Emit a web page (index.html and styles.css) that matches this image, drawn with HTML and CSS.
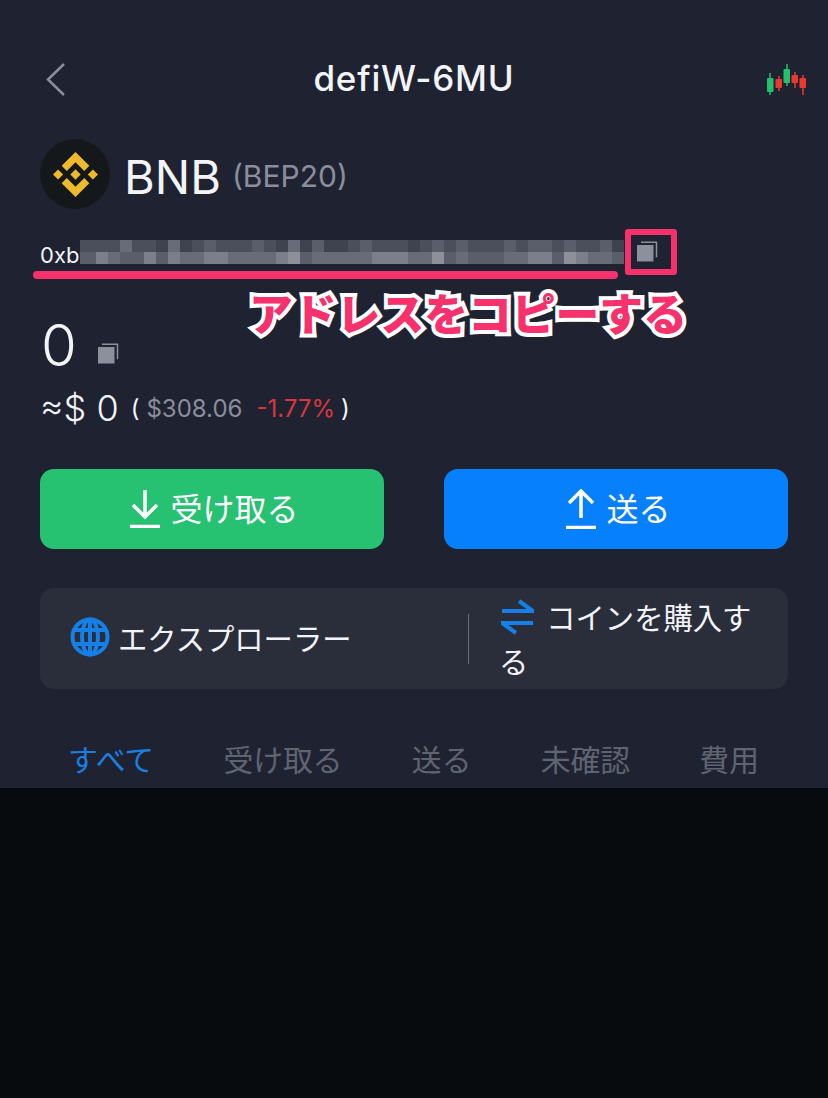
FILE: index.html
```html
<!DOCTYPE html>
<html lang="ja">
  <head>
    <meta charset="UTF-8" />
    <meta name="viewport" content="width=device-width, initial-scale=1.0" />
    <title>defiW-6MU</title>
    <link rel="stylesheet" href="styles.css">
  </head>

  <body>
    <div class="app">
      <div class="header">
        <svg class="back" width="20" height="34" viewBox="0 0 20 34"><path d="M18 2 2 17.500 18 33"/></svg>
        <h1 class="title">defiW-6MU</h1>
        <svg class="chart" width="42" height="32" viewBox="0 0 42 32">
          <path class="wick-g" d="M4 9v22M21 0v22"/>
          <path class="wick-r" d="M13 12v15M29 8v16M37 11v20"/>
          <rect class="body-g" x="1" y="14" width="6.500" height="14" rx="1"/>
          <rect class="body-r" x="9.500" y="15" width="6.500" height="9" rx="1"/>
          <rect class="body-g" x="17.500" y="5" width="6.500" height="14" rx="1"/>
          <rect class="body-r" x="25.500" y="11" width="6.500" height="8" rx="1"/>
          <rect class="body-r" x="33.500" y="14" width="6.500" height="10" rx="1"/>
        </svg>
      </div>

      <div class="coin">
        <div class="coin-logo">
          <svg width="45" height="45" viewBox="0 0 126.610 126.610">
            <polygon points="38.730 53.200 63.310 28.620 87.900 53.210 102.200 38.910 63.310 0 24.420 38.900"/>
            <polygon points="0 63.310 14.300 49.010 28.600 63.310 14.300 77.610"/>
            <polygon points="38.730 73.410 63.310 98 87.900 73.400 102.210 87.690 63.310 126.610 24.420 87.710"/>
            <polygon points="98.010 63.310 112.310 49.010 126.610 63.310 112.310 77.610"/>
            <polygon points="77.810 63.300 63.310 48.810 48.820 63.300 63.310 77.800"/>
          </svg>
        </div>
        <span class="coin-name">BNB</span>
        <span class="coin-net">(BEP20)</span>
      </div>

      <div class="address">
        <span class="address-head">0xb</span>
        <div class="blur">
          <i class="t2"></i><i class="t2"></i><i class="t2"></i><i class="t2"></i><i class="t4"></i><i class="t2"></i><i class="t2"></i><i class="t1"></i><i class="t4"></i><i class="t1"></i><i class="t2"></i><i class="t3"></i><i class="t2"></i><i class="t2"></i><i class="t2"></i><i class="t3"></i>
          <i class="t2"></i><i class="t1"></i><i class="t4"></i><i class="t1"></i><i class="t3"></i><i class="t1"></i><i class="t1"></i><i class="t2"></i><i class="t3"></i><i class="t2"></i><i class="t2"></i><i class="t2"></i><i class="t1"></i><i class="t2"></i><i class="t3"></i>
          <i class="t2"></i><i class="t3"></i><i class="t2"></i><i class="t2"></i><i class="t2"></i><i class="t3"></i><i class="t2"></i><i class="t3"></i><i class="t3"></i><i class="t2"></i><i class="t3"></i><i class="t2"></i><i class="t2"></i><i class="t3"></i><i class="t1"></i>
          <i class="t3"></i><i class="t3"></i><i class="t5"></i><i class="t4"></i><i class="t3"></i><i class="t3"></i><i class="t5"></i><i class="t3"></i><i class="t5"></i><i class="t4"></i><i class="t4"></i><i class="t5"></i><i class="t5"></i><i class="t4"></i><i class="t4"></i><i class="t4"></i>
          <i class="t4"></i><i class="t5"></i><i class="t6"></i><i class="t3"></i><i class="t4"></i><i class="t4"></i><i class="t4"></i><i class="t4"></i><i class="t4"></i><i class="t5"></i><i class="t5"></i><i class="t5"></i><i class="t4"></i><i class="t4"></i><i class="t6"></i>
          <i class="t3"></i><i class="t4"></i><i class="t3"></i><i class="t3"></i><i class="t3"></i><i class="t4"></i><i class="t4"></i><i class="t5"></i><i class="t5"></i><i class="t3"></i><i class="t6"></i><i class="t5"></i><i class="t4"></i><i class="t4"></i><i class="t3"></i>
        </div>
        <svg class="copy copy-address" width="22" height="22" viewBox="0 0 22 22">
          <rect class="copy-front" x="1" y="4" width="16.500" height="16.500"/>
          <path class="copy-back" d="M5 1.200h15.500v15"/>
        </svg>
        <span class="mark-line"></span>
        <span class="mark-box"></span>
        <span class="mark-text">アドレスをコピーする</span>
      </div>

      <div class="balance">
        <span class="balance-num">0</span>
        <svg class="copy" width="22" height="22" viewBox="0 0 22 22">
          <rect class="copy-front" x="1" y="4" width="16.500" height="16.500"/>
          <path class="copy-back" d="M5 1.200h15.500v15"/>
        </svg>
      </div>

      <div class="value">
        <span class="value-main">≈$ 0</span>
        <span class="value-paren">(</span>
        <span class="value-price">$308.06</span>
        <span class="value-change">-1.77%</span>
        <span class="value-paren">)</span>
      </div>

      <div class="actions">
        <button class="btn btn-green">
          <svg width="30" height="38" viewBox="0 0 30 38"><path d="M15 0v26M3 15l12 12 12-12M0 36.500h30"/></svg>
          受け取る
        </button>
        <button class="btn btn-blue">
          <svg width="30" height="40" viewBox="0 0 30 40"><path d="M15 3v26M3 14 15 2l12 12M0 38.500h30"/></svg>
          送る
        </button>
      </div>

      <div class="links">
        <div class="link-left">
          <svg class="globe" width="40" height="40" viewBox="0 0 40 40">
            <circle cx="20" cy="20" r="17.500"/>
            <ellipse cx="20" cy="20" rx="8" ry="17.500"/>
            <path d="M20 2v36M4 13h32M4 27h32"/>
          </svg>
          <span>エクスプローラー</span>
        </div>
        <div class="link-sep"></div>
        <div class="link-right">
          <svg class="swap" width="33" height="36" viewBox="0 0 33 36"><path d="M1 12h31L18 2M32 24H1l14 10"/></svg>
          コインを購入する
        </div>
      </div>

      <div class="tabs">
        <span class="tab tab-active">すべて</span>
        <span class="tab">受け取る</span>
        <span class="tab">送る</span>
        <span class="tab">未確認</span>
        <span class="tab">費用</span>
      </div>
    </div>
    <div class="list"></div>
  </body>
</html>
```

FILE: styles.css
```css
* {
  box-sizing: border-box;
}

body {
  margin: 0;
  background: #070b0e;
  font-family: Inter, "Noto Sans CJK JP", sans-serif;
}

.app {
  height: 788px;
  padding: 60px 40px 0;
  background: #1f2331;
  color: #f2f4f8;
}

.list {
  height: 310px;
}

/* header */
.header {
  display: grid;
  grid-template-columns: 1fr auto 1fr;
  align-items: center;
  height: 40px;
}

.back {
  margin: -2px 0 0 6px;
  fill: none;
  stroke: #8a8e98;
  stroke-width: 2.500;
}

.title {
  margin: -4px 0 0;
  font-size: 35px;
  font-weight: 500;
  letter-spacing: 0.8px;
}

.chart {
  justify-self: end;
  margin-right: -20px;
}

.wick-g {
  stroke: #25bf6f;
  stroke-width: 1.500;
}

.wick-r {
  stroke: #e83a30;
  stroke-width: 1.500;
}

.body-g {
  fill: #25bf6f;
}

.body-r {
  fill: #e83a30;
}

/* coin */
.coin {
  display: flex;
  align-items: center;
  height: 70px;
  margin-top: 39px;
}

.coin-logo {
  display: flex;
  justify-content: center;
  align-items: center;
  width: 70px;
  height: 70px;
  border-radius: 50%;
  background: #15181b;
}

.coin-logo polygon {
  fill: #eeb92d;
}

.coin-name {
  margin: 4px 0 0 14px;
  font-size: 47px;
  font-weight: 400;
}

.coin-net {
  margin: 4px 0 0 11px;
  font-size: 30px;
  color: #8a8e9c;
}

/* address */
.address {
  position: relative;
  display: flex;
  align-items: center;
  height: 24px;
  margin-top: 31px;
}

.address-head {
  width: 40px;
  font-size: 22px;
  margin-top: 6px;
}

.blur {
  display: grid;
  grid-template-columns: 4px repeat(45, 12px);
  grid-template-rows: 12px 12px;
  width: 544px;
}

.t1 { background: #3f4350; }
.t2 { background: #4b4f5c; }
.t3 { background: #5a5e6b; }
.t4 { background: #686c78; }
.t5 { background: #7b7f8a; }
.t6 { background: #8d9099; }

.copy-front {
  fill: #8c909c;
}

.copy-back {
  fill: none;
  stroke: #8c909c;
  stroke-width: 1.500;
}

.copy-address {
  margin-left: 12px;
}

/* the red notes drawn over the screenshot */
.mark-line {
  position: absolute;
  left: -7px;
  top: 31px;
  width: 585px;
  height: 8px;
  border-radius: 4px;
  background: #f7316c;
}

.mark-box {
  position: absolute;
  left: 585px;
  top: -11px;
  width: 52px;
  height: 46px;
  border: 6px solid #f7316c;
  border-radius: 3px;
}

.mark-text {
  position: absolute;
  left: 209px;
  top: 40px;
  font-family: "Noto Sans CJK JP", sans-serif;
  font-size: 43.800px;
  font-weight: 900;
  line-height: 64px;
  white-space: nowrap;
  color: #f7316c;
  -webkit-text-stroke: 8px #fff;
  paint-order: stroke fill;
  stroke-linejoin: round;
}

/* balance */
.balance {
  display: flex;
  align-items: center;
  height: 70px;
  margin-top: 46px;
}

.balance-num {
  font-size: 58px;
  font-weight: 300;
  margin-left: 1px;
}

.balance .copy {
  margin: 18px 0 0 20px;
}

.value {
  display: flex;
  align-items: center;
  height: 40px;
  margin-top: 8px;
  font-size: 24px;
}

.value-main {
  font-size: 36px;
  font-weight: 300;
  margin-right: 12px;
}

.value-price {
  margin: 0 14px 0 7px;
  color: #8a8e9c;
}

.value-change {
  margin-right: 6px;
  color: #d9363e;
}

/* buttons */
.actions {
  display: flex;
  gap: 60px;
  margin-top: 41px;
}

.btn {
  display: flex;
  flex: 1;
  justify-content: center;
  align-items: center;
  gap: 10px;
  height: 80px;
  padding: 0 0 4px 5px;
  border: none;
  border-radius: 14px;
  color: #fff;
  font-family: inherit;
  font-size: 32px;
}

.btn svg {
  margin-top: 4px;
  fill: none;
  stroke: #fff;
  stroke-width: 3.500;
}

.btn-green {
  background: #26c171;
}

.btn-blue {
  background: #0780fd;
}

/* explorer and buy */
.links {
  display: flex;
  align-items: center;
  height: 101px;
  margin-top: 39px;
  padding: 4px 0 0 30px;
  border-radius: 14px;
  background: #2a2e3b;
  font-size: 29.300px;
}

.link-left {
  display: flex;
  align-items: center;
  gap: 8px;
  width: 398px;
  margin-top: -7px;
}

.globe {
  fill: none;
  stroke: #1480e8;
  stroke-width: 4;
}

.link-sep {
  width: 1px;
  height: 50px;
  margin-top: -4px;
  background: #6a6e7a;
}

.link-right {
  width: 262px;
  margin-left: 30px;
  line-height: 44px;
}

.swap {
  margin: 0 4px 0 2px;
  vertical-align: -6px;
  fill: none;
  stroke: #1480e8;
  stroke-width: 4;
}

/* tabs */
.tabs {
  display: flex;
  justify-content: space-between;
  margin-top: 50px;
  padding: 0 29px 0 28px;
  font-size: 29.800px;
  line-height: 42px;
}

.tab {
  color: #5f6471;
}

.tab-active {
  color: #1a7fe0;
}
```
